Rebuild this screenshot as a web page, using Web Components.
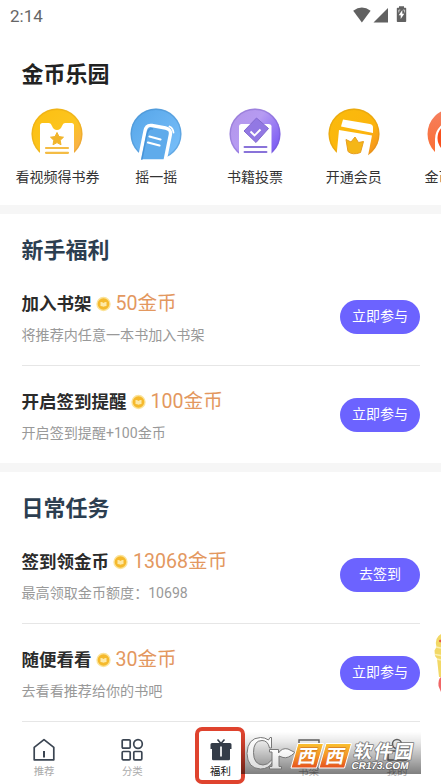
<!DOCTYPE html>
<html lang="zh-CN">
<head>
<meta charset="utf-8">
<title>金币乐园</title>
<style>
html,body{margin:0;padding:0;background:#fff}
body{width:441px;height:784px;overflow:hidden;font-family:Roboto,"Noto Sans CJK SC",sans-serif;color:#262626}
</style>
</head>
<body>
<coin-park></coin-park>
<script>
const make=(name,html)=>customElements.define(name,class extends HTMLElement{
  connectedCallback(){
    if(this.shadowRoot)return;
    const t=document.createElement('template');
    t.innerHTML=typeof html==='function'?html(this):html;
    this.attachShadow({mode:'open'}).append(t.content.cloneNode(true));
  }
});

make('status-bar',`<style>
:host{display:flex;height:30px;box-sizing:border-box;padding:0 33px 0 10px;align-items:center;justify-content:space-between;color:#666;font-size:17px;line-height:30px}
span{padding-top:1px}svg{display:block}
</style><span>2:14</span>
<svg width="56" height="18" viewBox="0 0 56 18">
<path d="M1.2 4.8Q9.9-1.6 18.6 4.8L9.9 16.5Z" fill="#616161"/>
<path d="M21.5 16.4 36 2V16.4Z" fill="#616161"/>
<path d="M46 1.800h2V.2h5v1.6h1.5q.7 0 .7.8v12.700q0 .8-.8.8h-7.8q-.8 0-.8-.8V2.600q0-.8.8-.8Z" transform="translate(-1)" fill="#616161"/>
<path d="M50.3 4v3.8h2L48.7 13v-3.800h-2Z" fill="#fff"/><path d="M46.800 6.500V4h1.500M51.100 4h1.500v2.500" fill="none" stroke="#ddd" stroke-width=".8"/>
</svg>`);

const art={
ticket:`<defs><linearGradient id="g" x2="1" y2="1"><stop stop-color="#fcbf10"/><stop offset=".55" stop-color="#fcc51f"/><stop offset="1" stop-color="#f7a660"/></linearGradient></defs>
<circle cx="26" cy="26" r="25.500" fill="url(#g)"/><circle cx="26" cy="26" r="24.800" fill="none" stroke="#d99a17" stroke-width="1.400" stroke-opacity=".35"/>
<path d="M9 52V17.500q0-2.500 2.500-2.500H18q2 0 3 3 1.500 4 5 4t5-4q1-3 3-3h6.500q2.500 0 2.500 2.500V52Z" fill="#fff"/>
<path d="M26 24.500l2 4.100 4.500.6-3.300 3.100.8 4.500-4-2.200-4 2.200.8-4.500-3.300-3.100 4.500-.6Z" fill="#f1b52b" stroke="#f1b52b" stroke-linejoin="round"/>
<path d="M15 40h22M15 44.800h22" stroke="#f4bc45" stroke-width="2.200" stroke-linecap="round"/>`,
shake:`<defs><linearGradient id="g" x2="1" y2="1"><stop stop-color="#55a5e8"/><stop offset="1" stop-color="#7cc1fb"/></linearGradient></defs>
<circle cx="26" cy="26" r="25.500" fill="url(#g)"/><circle cx="26" cy="26" r="24.800" fill="none" stroke="#3c80bd" stroke-width="1.400" stroke-opacity=".35"/>
<path d="M9 53 15 23Q16.200 16.500 22 17.500L35.500 20Q41.500 21.200 40.300 27L35 53Z" fill="#5fabeb" stroke="#fff" stroke-width="3.400"/>
<path d="M11.500 53 17 26.500Q18 20 23 21" fill="none" stroke="#3785cd" stroke-width="1.500" opacity=".6"/>
<path d="M19.500 28.500l11 3M18 34.500l11.500 3" stroke="#fff" stroke-width="2.200" stroke-linecap="round"/>
<path d="M39.500 18.500q3.500 1.500 4 6" fill="none" stroke="#fff" stroke-width="1.800" stroke-linecap="round"/>`,
vote:`<defs><linearGradient id="g" x2="1" y2=".8"><stop stop-color="#b294e8"/><stop offset=".45" stop-color="#b69bf2"/><stop offset="1" stop-color="#7655f4"/></linearGradient></defs>
<circle cx="26" cy="26" r="25.500" fill="url(#g)"/><circle cx="26" cy="26" r="24.800" fill="none" stroke="#7155bd" stroke-width="1.400" stroke-opacity=".35"/>
<path d="M10 52V18.500q0-2.500 2.500-2.500h27q3 0 3 2.500V52Z" fill="#fff"/>
<path d="M27.500 10 39.500 20.500 27 34.500 15 23Z" fill="#9278e3" stroke="#8269cf"/>
<path d="M21.500 23.500l4 4 6-6" fill="none" stroke="#fff" stroke-width="1.900"/>
<path d="M15.500 39h22M15.500 44h22" stroke="#8973d9" stroke-width="1.900" stroke-linecap="round"/>`,
vip:`<defs><linearGradient id="g" x2="1" y2="1"><stop stop-color="#fabb0b"/><stop offset=".6" stop-color="#fcb50d"/><stop offset="1" stop-color="#f3832a"/></linearGradient></defs>
<circle cx="26" cy="26" r="25.500" fill="url(#g)"/><circle cx="26" cy="26" r="24.800" fill="none" stroke="#cd9013" stroke-width="1.400" stroke-opacity=".35"/>
<path d="M15 11.500 42 16q3 .5 3 3.500v5.500L13 18.500Z" fill="#fff"/><path d="M11 22 44 27.500 39 53H8Z" fill="#fff"/>
<path d="M18 31.500l5 2.500 4-5 3.500 5.500 5-1-3 11q-8 3-12.500-1Z" fill="#f5b617" stroke="#e79e20"/>`,
coin:`<defs><linearGradient id="g" x2="0" y2="1"><stop stop-color="#f58061"/><stop offset="1" stop-color="#fb6b2c"/></linearGradient></defs>
<circle cx="26" cy="26" r="25.500" fill="url(#g)"/><path d="M8 52V31a18 18 0 0 1 36 0V52Z" fill="#fff"/><circle cx="26" cy="30" r="15.500" fill="#f8501d"/>`
};
make('park-shortcut',el=>`<style>
:host{display:flex;flex:none;width:98.800px;flex-direction:column;align-items:center;font-size:14px;line-height:20px;color:#333}
div{width:52px;height:52px;margin-bottom:7px}svg{display:block}
span{white-space:nowrap}
</style><div><svg width="52" height="52" viewBox="0 0 52 52">${art[el.getAttribute('icon')]}</svg></div><span><slot></slot></span>`);

make('park-header',`<style>
:host{display:block;height:175px;overflow:hidden}
h1{margin:0;padding:28px 0 0 21.500px;font-size:22px;line-height:33px;font-weight:700;color:#222}
nav{display:flex;padding:17px 0 0 8px}
</style><h1>金币乐园</h1><nav>
<park-shortcut icon="ticket">看视频得书券</park-shortcut><park-shortcut icon="shake">摇一摇</park-shortcut><park-shortcut icon="vote">书籍投票</park-shortcut><park-shortcut icon="vip">开通会员</park-shortcut><park-shortcut icon="coin">金币商城</park-shortcut></nav>`);

make('task-section',el=>`<style>
:host{display:block;border-top:9px solid #f6f6f6}
h2{margin:0;padding:20px 21.500px 0;height:54px;box-sizing:border-box;font-size:22px;line-height:33px;font-weight:700;color:#2c3e50}
</style><h2>${el.getAttribute('heading')}</h2><slot></slot>`);

make('task-row',el=>`<style>
:host{display:flex;height:98px;box-sizing:border-box;margin:0 21px 0 21.500px;align-items:center;justify-content:space-between;border-bottom:1px solid #e6e6e6}
:host([last]){height:97px;border-bottom:0}
.t{display:flex;align-items:center;height:30px;padding-top:1px;white-space:nowrap}
b{font-size:17.500px;color:#2b2b2b;line-height:30px}
svg{margin:0 5px 0 4px}
i{font-style:normal;font-size:19.600px;line-height:30px;color:#e3985f}
p{margin:5px 0 0;font-size:14.080px;line-height:22px;color:#999}
.b{display:flex;align-items:center;justify-content:center;width:80px;height:34px;border-radius:17px;background:#6c63ff;color:#fff;font-size:14px;line-height:20px;padding-bottom:2px;box-sizing:border-box}
</style><div><div class="t"><b>${el.getAttribute('name')}</b><svg width="15" height="16" viewBox="0 0 15 16"><circle cx="7.500" cy="8" r="7.200" fill="#fbe39a"/><circle cx="7.500" cy="8" r="5.800" fill="#f5b92c"/><path d="M4.500 6q1.700-.3 3 1 1.300-1.300 3-1v4q-1.700 0-3 .8-1.300-.8-3-.8Z" fill="#fde9a8"/></svg><i>${el.getAttribute('reward')}</i></div><p><slot></slot></p></div><div class="b">${el.getAttribute('action')}</div>`);

const tabs={
home:`<path d="M2.200 9.300 12 1.600 21.800 9.300V21.800H2.200Z" fill="none" stroke="#3b4552" stroke-width="1.700" stroke-linejoin="round"/><path d="M12 13v6.500" stroke="#3b4552" stroke-width="2"/>`,
grid:`<g fill="none" stroke="#3b4552" stroke-width="1.700"><rect x="2.200" y="1.800" width="8" height="8.300" rx="1"/><circle cx="18" cy="6" r="4.300"/><rect x="2.200" y="13.500" width="8" height="8.300" rx="1"/><rect x="13.800" y="13.500" width="8" height="8.300" rx="1"/></g>`,
gift:`<path d="M8.500 1.500 12 5.500 15.500 1.500" fill="none" stroke="#343c48" stroke-width="1.600"/><path d="M3 5h18q1.500 0 1.500 1.500V11H21v10q0 1.200-1.200 1.200H4.200Q3 22.200 3 21V11H1.500V6.500Q1.500 5 3 5Z" fill="#343c48"/><path d="M12 8.500v10" stroke="#fff" stroke-width="1.700"/>`,
shelf:`<path d="M2 2h20v5q-4 0-6 4l-3 10H2Z" fill="none" stroke="#666" stroke-width="1.400"/>`,
user:`<circle cx="12" cy="6" r="4.500" fill="none" stroke="#666" stroke-width="1.500"/><path d="M3 22v-4q0-5 5-5h8q5 0 5 5v4Z" fill="none" stroke="#666" stroke-width="1.500"/>`
};
make('tab-item',el=>`<style>
:host{display:flex;flex:1;flex-direction:column;align-items:center;font-size:10.400px;line-height:14px;color:#aaa}
:host([active]){color:#111}
svg{display:block;margin-bottom:3px}
</style><svg width="24" height="24" viewBox="0 0 24 24">${tabs[el.getAttribute('icon')]}</svg><slot></slot>`);
make('tab-bar',`<style>
:host{display:flex;height:62px;padding-top:16px;box-sizing:border-box;background:#fff}
</style><tab-item icon="home">推荐</tab-item><tab-item icon="grid">分类</tab-item><tab-item icon="gift" active>福利</tab-item><tab-item icon="shelf">书架</tab-item><tab-item icon="user">我的</tab-item>`);

make('tab-highlight',`<style>
:host{position:absolute;left:195px;top:727px;width:50px;height:57px;box-sizing:border-box;border:4px solid #df432e;border-radius:7px}
</style>`);

make('site-mark',`<style>
:host{position:absolute;left:241px;top:728px;width:180px;height:46px;background:linear-gradient(#0000 8%,rgba(0,0,0,.09) 30%,rgba(0,0,0,.5))}
svg{display:block}
text{paint-order:stroke;stroke-linejoin:round}
</style><svg width="180" height="46" viewBox="0 0 180 46">
<defs><linearGradient id="o" x2="0" y2="1"><stop stop-color="#fac12f"/><stop offset=".5" stop-color="#f49427"/><stop offset="1" stop-color="#e5501e"/></linearGradient><linearGradient id="w" x2="0" y2="1"><stop stop-color="#fff"/><stop offset="1" stop-color="#ddd"/></linearGradient></defs>
<g stroke="#777" stroke-width="1" fill="url(#w)">
<path d="M30.500 9.500V20H28.500Q27 12.500 21 12.500 12.500 12.500 12.500 24.500T22 37Q27 37 30.500 32l1.500 1.500Q28 41 19.500 41 6.500 40.500 6 25.500 6.500 10 19.500 9.500 24 9.500 27.500 12L29 9.500Z"/>
<path d="M28.500 21.500h9v3.500Q41 19.500 47 21L54 24.500Q47 31 42 29.500L38 28V38.500h2.500V41H28.500V38.500H31V24H28.500Z"/></g>
<g fill="url(#o)" stroke="#fff" stroke-width="1"><path d="M57 15.500H82.500L75.500 40H50Z"/><path d="M85 15.500H110.500L103.500 40H78Z"/></g>
<g fill="#fff" stroke="#c8641e" stroke-width=".6" font-family="'Noto Sans CJK SC',sans-serif" font-weight="700" font-size="19"><text transform="translate(55.500 34.500) skewX(-12)">西</text><text transform="translate(83.500 34.500) skewX(-12)">西</text></g>
<text transform="translate(112 30) skewX(-10)" font-family="'Noto Sans CJK SC',sans-serif" font-weight="700" font-size="18.500" textLength="59" fill="#fff" stroke="#777" stroke-width="1.600">软件园</text>
<text transform="translate(110 40.500) skewX(-10)" font-family="'Liberation Sans',sans-serif" font-weight="700" font-size="10" textLength="57" fill="#fff" stroke="#666" stroke-width="1.500">CR173.COM</text>
</svg>`);

make('float-treat',`<style>
:host{position:absolute;left:433px;top:633px;width:8px;height:62px;overflow:hidden}svg{display:block}
</style><svg width="8" height="62" viewBox="0 0 8 62"><path d="M8 1Q1 5 3.500 14L1.500 17.500 2 23 4 25.500 6 44H8Z" fill="#f2d866"/><path d="M3 14l5 1M2 21.500l6 1M4 26l4 1" stroke="#fbefae" stroke-width="1.600"/><circle cx="7.300" cy="8" r="1.300" fill="#e65847"/><path d="M8 44Q5 46 5.500 53L8 59Z" fill="#f06666"/></svg>`);

make('coin-park',`<style>
:host{display:flex;flex-direction:column;position:relative;width:441px;height:784px;overflow:hidden;background:#fff}
</style><status-bar></status-bar><park-header></park-header>
<task-section heading="新手福利">
<task-row name="加入书架" reward="50金币" action="立即参与">将推荐内任意一本书加入书架</task-row>
<task-row name="开启签到提醒" reward="100金币" action="立即参与" last>开启签到提醒+100金币</task-row></task-section>
<task-section heading="日常任务">
<task-row name="签到领金币" reward="13068金币" action="去签到">最高领取金币额度：10698</task-row>
<task-row name="随便看看" reward="30金币" action="立即参与">去看看推荐给你的书吧</task-row></task-section>
<tab-bar></tab-bar><float-treat></float-treat><tab-highlight></tab-highlight><site-mark></site-mark>`);
</script>
</body>
</html>
